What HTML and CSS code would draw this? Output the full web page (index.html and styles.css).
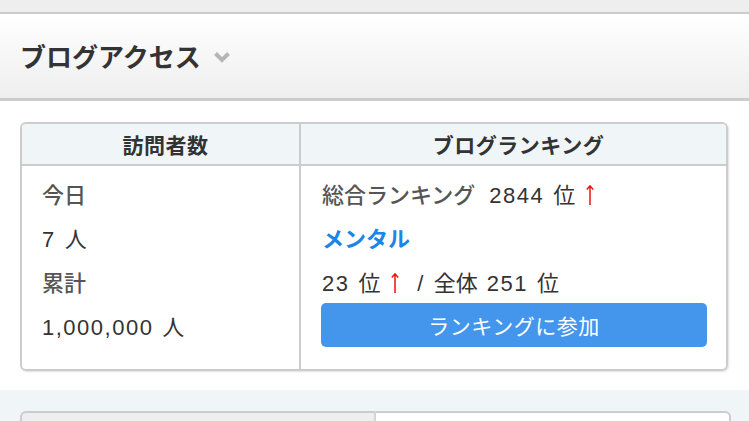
FILE: index.html
```html
<!DOCTYPE html>
<html lang="ja">
<head>
<meta charset="utf-8">
<link rel="stylesheet" href="styles.css">
</head>
<body>
<div class="topbar"></div>
<header class="header">
  <h1 class="title">ブログアクセス</h1>
  <svg class="chev" width="18" height="12" viewBox="0 0 18 12"><polyline points="2.5,2.5 9,9 15.5,2.5" fill="none" stroke="#b5b5b5" stroke-width="4"/></svg>
</header>
<main class="main">
  <div class="box">
    <div class="th th-left">訪問者数</div>
    <div class="th th-right">ブログランキング</div>
    <div class="td td-left">
      <div class="line label">今日</div>
      <div class="line"><span class="num">7</span> 人</div>
      <div class="line label">累計</div>
      <div class="line"><span class="num">1,000,000</span> 人</div>
    </div>
    <div class="td td-right">
      <div class="line"><span class="label lead">総合ランキング</span> <span class="num">2844</span> 位 <svg class="up" width="8" height="22" viewBox="0 0 8 22"><path d="M4 21V2M0.8 5.5L4 1.8 7.2 5.5" fill="none" stroke="#ee1111" stroke-width="1.5"/></svg></div>
      <div class="line"><a class="cat">メンタル</a></div>
      <div class="line"><span class="num">23</span> 位 <svg class="up" width="8" height="22" viewBox="0 0 8 22"><path d="M4 21V2M0.8 5.5L4 1.8 7.2 5.5" fill="none" stroke="#ee1111" stroke-width="1.5"/></svg> <span class="num slash">/</span> 全体 <span class="num">251</span> 位</div>
      <div class="btn">ランキングに参加</div>
    </div>
  </div>
</main>
<section class="band">
  <div class="tabs">
    <div class="tab tab-off"></div>
    <div class="tab tab-on"></div>
  </div>
</section>
</body>
</html>
```

FILE: styles.css
```css
html, body {
  margin: 0;
  padding: 0;
  background: #ffffff;
  font-family: "Noto Sans CJK JP", "Noto Sans", sans-serif;
  color: #333333;
  overflow: hidden;
}
.topbar {
  height: 12px;
  background: #eeeeee;
}
.header {
  height: 84px;
  border-top: 2px solid #cccccc;
  border-bottom: 3px solid #cccccc;
  background: linear-gradient(#ffffff, #eeeeee);
  display: flex;
  align-items: center;
  padding-left: 20px;
}
.title {
  margin: 0;
  font-size: 26px;
  font-weight: bold;
  color: #333333;
  line-height: 30px;
}
.chev {
  margin-left: 12px;
  margin-top: 2px;
}
.main {
  padding: 21px 21px 19px 20px;
}
.box {
  display: grid;
  grid-template-columns: 279px 1fr;
  border: 2px solid #cccccc;
  border-radius: 6px;
  box-shadow: 1px 1px 2px rgba(0, 0, 0, 0.12);
  overflow: hidden;
}
.th {
  height: 40px;
  background: #f0f5f8;
  border-bottom: 2px solid #cccccc;
  display: flex;
  align-items: center;
  justify-content: center;
  padding-left: 10px;
  font-size: 21px;
  letter-spacing: 0.5px;
  font-weight: bold;
  color: #333333;
}
.th-left, .td-left {
  border-right: 2px solid #cccccc;
}
.td-left {
  padding: 5px 20px 22px 20px;
}
.td-right {
  padding: 5px 19px 20px 20px;
}
.line {
  height: 44px;
  line-height: 44px;
  font-size: 22px;
  word-spacing: 4px;
  color: #333333;
  white-space: nowrap;
}
.td-right .line {
  padding-left: 1px;
}
.num {
  font-family: "Liberation Sans", Arial, sans-serif;
  font-size: 22px;
  letter-spacing: 1.5px;
}
.label {
  color: #555555;
  font-weight: 500;
}
.lead {
  margin-right: 5px;
}
.slash {
  margin-left: 7px;
}
.up {
  vertical-align: -3px;
  margin: 0 2px;
}
.cat {
  color: #1a86e8;
  font-weight: bold;
}
.btn {
  height: 44px;
  border-radius: 5px;
  background: #4396ec;
  color: #ffffff;
  font-size: 21px;
  letter-spacing: 0.5px;
  display: flex;
  align-items: center;
  justify-content: center;
}
.band {
  background: #f0f5f8;
  padding: 21px 18px 0 20px;
  height: 11px;
}
.tabs {
  display: flex;
}
.tab {
  height: 9px;
  border: 2px solid #cccccc;
  border-bottom: none;
}
.tab-off {
  flex: 0 0 352px;
  background: #eeeeee;
  border-right: 2px solid #d4d4d4;
  border-radius: 6px 0 0 0;
}
.tab-on {
  flex: 1;
  background: #ffffff;
  border-left: none;
  border-radius: 0 6px 0 0;
}
```
